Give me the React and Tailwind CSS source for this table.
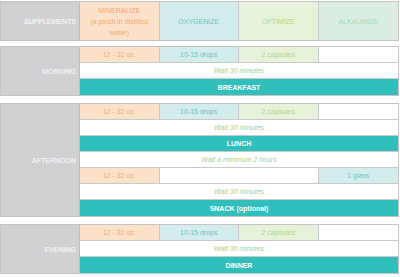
import React from 'react'

const cellMin = 'bg-[#fde2cb] text-[#f3a26b]'
const cellOxy = 'bg-[#d4ecec] text-[#62c7c4]'
const cellOpt = 'bg-[#e6f3da] text-[#add58a]'
const cellAlk = 'bg-[#dcede2] text-[#a4d6b8]'

function Row({ children, last }) {
  return (
    <div className={`grid grid-cols-4 h-[16px] ${last ? '' : 'border-b border-[#c8c8c8]'}`}>
      {children}
    </div>
  )
}

function Cell({ className = '', span = '', children }) {
  return (
    <div className={`flex items-center justify-center border-r border-[#c8c8c8] last:border-r-0 ${span} ${className}`}>
      {children}
    </div>
  )
}

function Doses({ alk }) {
  return (
    <>
      <Cell className={cellMin}>12 - 32 oz.</Cell>
      <Cell className={cellOxy}>10-15 drops</Cell>
      <Cell className={cellOpt}>2 capsules</Cell>
      <Cell className={alk ? cellAlk : 'bg-white'}>{alk}</Cell>
    </>
  )
}

function Wait({ text = 'Wait 30 minutes' }) {
  return (
    <div className="col-span-4 flex items-center justify-center bg-white italic text-[#a6cf88]">{text}</div>
  )
}

function Meal({ name }) {
  return (
    <div className="col-span-4 flex items-center justify-center bg-[#31bfbb] text-white font-bold">{name}</div>
  )
}

function Block({ label, children, className = '' }) {
  return (
    <div className={`flex border border-[#c4c4c4] ${className}`}>
      <div className="w-[79px] shrink-0 bg-[#d1d1d3] border-r border-[#bdbdbd] flex items-center justify-end pr-[3px] text-white uppercase">
        {label}
      </div>
      <div className="flex-1 flex flex-col">{children}</div>
    </div>
  )
}

export default function App() {
  return (
    <div className="w-[400px] h-[277px] bg-white pr-[1px] text-[7px] leading-[11px] font-['Liberation_Sans',Arial,sans-serif]">
      {/* header */}
      <div className="flex border border-[#c4c4c4] h-[40px] mt-[1px]">
        <div className="w-[79px] shrink-0 bg-[#d1d1d3] border-r border-[#bdbdbd] flex items-center justify-end pr-[3px] text-white">
          SUPPLEMENTS
        </div>
        <div className="flex-1 grid grid-cols-4">
          <Cell className={`${cellMin} text-center px-1`}>
            <span>MINERALIZE<br />(a pinch in distilled<br />water)</span>
          </Cell>
          <Cell className={cellOxy}>OXYGENIZE</Cell>
          <Cell className={cellOpt}>OPTIMIZE</Cell>
          <Cell className={cellAlk}>ALKALINIZE</Cell>
        </div>
      </div>

      {/* morning */}
      <Block label="Morning" className="mt-[5px]">
        <Row><Doses /></Row>
        <Row><Wait /></Row>
        <Row last><Meal name="BREAKFAST" /></Row>
      </Block>

      {/* afternoon */}
      <Block label="Afternoon" className="mt-[7px]">
        <Row><Doses /></Row>
        <Row><Wait /></Row>
        <Row><Meal name="LUNCH" /></Row>
        <Row><Wait text="Wait a minimum 2 hours" /></Row>
        <Row>
          <Cell className={cellMin}>12 - 32 oz.</Cell>
          <Cell span="col-span-2" className="bg-white" />
          <Cell className={cellOxy}>1 glass</Cell>
        </Row>
        <Row><Wait /></Row>
        <Row last><Meal name="SNACK (optional)" /></Row>
      </Block>

      {/* evening */}
      <Block label="Evening" className="mt-[7px]">
        <Row><Doses /></Row>
        <Row><Wait /></Row>
        <Row last><Meal name="DINNER" /></Row>
      </Block>
    </div>
  )
}
